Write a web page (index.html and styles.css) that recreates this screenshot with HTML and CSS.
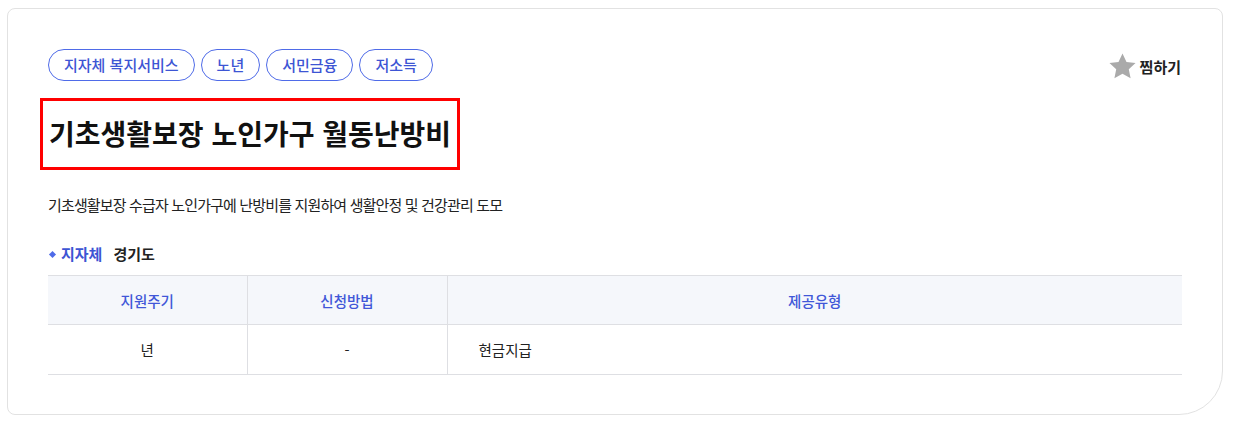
FILE: index.html
```html
<!DOCTYPE html>
<html lang="ko">
<head>
<meta charset="utf-8">
<link rel="stylesheet" href="styles.css">
</head>
<body>
<div class="card">
  <div class="top">
    <ul class="tags">
      <li class="tag">지자체 복지서비스</li>
      <li class="tag">노년</li>
      <li class="tag">서민금융</li>
      <li class="tag">저소득</li>
    </ul>
    <button class="wish" type="button">
      <svg class="star" width="29" height="29" viewBox="0 0 24 24"><path d="M12 1.2l3.3 7 7.5.9-5.6 5.2 1.5 7.5L12 18.1l-6.7 3.7 1.5-7.5L1.2 9.1l7.5-.9z" fill="#aaaaaa"/></svg>
      <span>찜하기</span>
    </button>
  </div>
  <h1 class="title">기초생활보장 노인가구 월동난방비</h1>
  <p class="desc">기초생활보장 수급자 노인가구에 난방비를 지원하여 생활안정 및 건강관리 도모</p>
  <div class="meta"><span class="meta-label">지자체</span><span class="meta-value">경기도</span></div>
  <table class="info">
    <thead>
      <tr><th class="c1">지원주기</th><th class="c2">신청방법</th><th class="c3">제공유형</th></tr>
    </thead>
    <tbody>
      <tr><td class="c1">년</td><td class="c2">-</td><td class="c3 left">현금지급</td></tr>
    </tbody>
  </table>
</div>
</body>
</html>
```
FILE: styles.css
```css
* { box-sizing: border-box; }
body {
  margin: 0;
  background: #fff;
  font-family: "Noto Sans CJK KR", "Noto Sans", sans-serif;
  color: #222;
}
.card {
  margin: 8px 0 0 7px;
  width: 1216px;
  height: 407px;
  border: 1px solid #e2e2e2;
  border-radius: 8px 8px 44px 8px;
  padding: 40px 40px 0 40px;
}
.top {
  display: flex;
  justify-content: space-between;
  align-items: center;
  height: 32px;
}
.tags {
  list-style: none;
  margin: 0;
  padding: 0;
  display: flex;
  gap: 6px;
}
.tag {
  height: 32px;
  border: 1px solid #4f6be8;
  border-radius: 16px;
  padding: 0 15px;
  font-size: 15px;
  line-height: 30px;
  color: #3d55d4;
  font-weight: 500;
}
.wish {
  display: flex;
  align-items: center;
  gap: 3px;
  border: 0;
  background: none;
  padding: 0 1px 0 0;
  font-family: inherit;
  font-size: 15px;
  font-weight: 700;
  color: #222;
  margin-top: 2px;
}
.title {
  display: inline-block;
  margin: 17px 0 0 -8px;
  border: 3px solid #ff0000;
  padding: 0 6px;
  height: 72px;
  line-height: 64px;
  font-size: 28px;
  font-weight: 700;
  color: #111;
}
.desc {
  margin: 24px 0 0;
  font-size: 15px;
  line-height: 22px;
  letter-spacing: -0.85px;
  color: #222;
}
.meta {
  margin-top: 27px;
  display: flex;
  align-items: center;
  font-size: 15px;
  line-height: 22px;
  font-weight: 700;
}
.meta-label {
  color: #3d55d4;
  position: relative;
  padding-left: 13px;
  margin-right: 11px;
}
.meta-label::before {
  content: "";
  position: absolute;
  left: 2px;
  top: 9px;
  width: 5px;
  height: 5px;
  background: #4f6be8;
  transform: rotate(45deg);
}
.meta-value { color: #222; font-weight: 600; }
.info {
  margin-top: 10px;
  width: 1134px;
  border-collapse: collapse;
  border-top: 1px solid #dedfe3;
  font-size: 14.5px;
}
.info th {
  background: #f5f7fb;
  color: #4157d8;
  font-weight: 500;
  height: 49px;
  border-bottom: 1px solid #dedfe3;
}
.info td {
  height: 50px;
  border-bottom: 1px solid #dedfe3;
  text-align: center;
  color: #222;
}
.info th + th, .info td + td { border-left: 1px solid #dedfe3; }
.c1 { width: 199px; }
.c2 { width: 200px; }
.info td.left { text-align: left; padding-left: 31px; }
```
